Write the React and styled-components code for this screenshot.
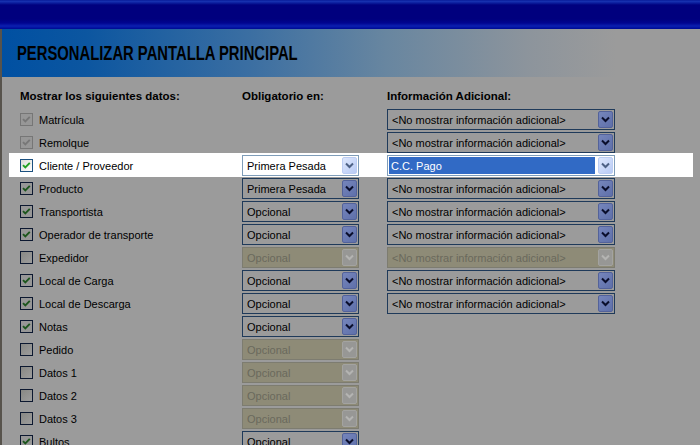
import React from "react";
import styled, { createGlobalStyle, css } from "styled-components";

const Global = createGlobalStyle`
  html, body { margin: 0; padding: 0; }
  body {
    width: 700px; height: 445px; overflow: hidden;
    background: #9b9b9b;
    font-family: "Liberation Sans", Arial, sans-serif;
  }
`;

const Window = styled.div`
  width: 700px; height: 445px; overflow: hidden;
  display: flex; flex-direction: column;
  background: #9b9b9b;
`;

const TitleBar = styled.div`
  height: 29px; flex: none;
  background: linear-gradient(to bottom,
    #00108f 0px, #1a36b4 1px, #0a1c9c 3px, #00007e 5px,
    #00007e 19px, #000490 23px, #0c20b0 26px, #0010a0 28px, #000a90 29px);
`;

const Main = styled.div`
  flex: 1;
  border-left: 2px solid #57534c;
  display: flex; flex-direction: column;
`;

const Header = styled.div`
  height: 48px; flex: none;
  display: flex; align-items: center;
  padding-left: 15px;
  background: linear-gradient(to right, #0050a2 0%, #0c56a0 12%, #3a6ea2 35%, #6886a0 55%, #8c949c 75%, #9b9b9b 88%);
`;

const Title = styled.h1`
  margin: 0;
  font-family: "Liberation Sans", Arial, sans-serif;
  font-weight: bold;
  font-size: 20px;
  color: #000;
  white-space: nowrap;
  transform: scaleX(0.74);
  transform-origin: left center;
`;

const Content = styled.div`
  display: flex; flex-direction: column;
  padding-left: 7px;
`;

const Grid = css`
  display: grid;
  grid-template-columns: 222px 145px 228px;
  align-items: center;
  width: 684px;
  padding-left: 11px;
  box-sizing: border-box;
`;

const HeadRow = styled.div`
  ${Grid};
  height: 31px;
  padding-top: 6px;
  box-sizing: border-box;
`;

const ColHead = styled.div`
  font-weight: bold;
  font-size: 11.5px;
  color: #000;
`;

const Row = styled.div`
  ${Grid};
  height: 23px;
  background: ${(p) => (p.$hl ? "#ffffff" : "transparent")};
  box-shadow: ${(p) => (p.$hl ? "0 -1px 0 #ffffff" : "none")};
`;

const LabelCell = styled.div`
  display: flex; align-items: center; gap: 6px;
  font-size: 11px; color: #000;
`;

const Box = styled.span`
  width: 13px; height: 13px; box-sizing: border-box;
  display: inline-flex; align-items: center; justify-content: center;
  border: 1px solid ${(p) => (p.$hl ? "#1c5180" : p.$state === "disabled" ? "#767676" : "#0c1830")};
  background: ${(p) => (p.$hl ? "linear-gradient(135deg,#dcdcd7,#ffffff)" : p.$state === "off" ? "linear-gradient(135deg,#888884,#9d9d9d)" : "#979797")};
`;

const Combo = styled.div`
  width: ${(p) => p.$w}px; height: 21px; box-sizing: border-box;
  display: flex; align-items: center;
  padding: 1px;
  border: 1px solid ${(p) => (p.$hl ? "#7f9db9" : p.$disabled ? "#7d7c70" : "#1f3a5a")};
  background: ${(p) => (p.$hl ? "#ffffff" : p.$disabled ? "#8e8b77" : "#9b9b9b")};
`;

const ComboText = styled.div`
  flex: 1; height: 100%;
  display: flex; align-items: center;
  padding-left: ${(p) => (p.$sel ? "2px" : "3px")};
  margin-right: ${(p) => (p.$sel ? "3px" : "0")};
  font-size: 11px;
  white-space: nowrap; overflow: hidden;
  color: ${(p) => (p.$sel ? "#ffffff" : p.$disabled ? "#6a695c" : "#000")};
  background: ${(p) => (p.$sel ? "#316ac5" : "transparent")};
`;

const ComboBtn = styled.div`
  width: 15px; height: 100%; flex: none; box-sizing: border-box;
  display: flex; align-items: center; justify-content: center;
  border: 1px solid ${(p) => (p.$hl ? "#bccdf3" : p.$disabled ? "#a3a3a0" : "#53629a")};
  border-radius: 2px;
  background: ${(p) =>
    p.$hl
      ? "linear-gradient(135deg,#dde7fd,#b9cbf5)"
      : p.$disabled
      ? "#979795"
      : "linear-gradient(135deg,#7585bb,#5f70aa)"};
`;

const Check = ({ color }) => (
  <svg width="9" height="9" viewBox="0 0 9 9">
    <path d="M1 4.2 L3.3 6.5 L7.8 1.8" fill="none" stroke={color} strokeWidth="1.9" />
  </svg>
);

const Chevron = ({ color }) => (
  <svg width="9" height="7" viewBox="0 0 9 7">
    <path d="M1 1.5 L4.5 5 L8 1.5" fill="none" stroke={color} strokeWidth="2" />
  </svg>
);

const CheckBox = ({ state, hl }) => (
  <Box $state={state} $hl={hl}>
    {state !== "off" && (
      <Check color={hl ? "#21a121" : state === "disabled" ? "#777777" : "#1d561d"} />
    )}
  </Box>
);

const Select = ({ value, w, disabled, hl, sel }) => (
  <Combo $w={w} $disabled={disabled} $hl={hl}>
    <ComboText $disabled={disabled} $sel={sel}>{value}</ComboText>
    <ComboBtn $disabled={disabled} $hl={hl}>
      <Chevron color={hl ? "#4d6185" : disabled ? "#b4b4b2" : "#0a0e2c"} />
    </ComboBtn>
  </Combo>
);

const NO = "<No mostrar información adicional>";

const rows = [
  { label: "Matrícula", check: "disabled", info: NO },
  { label: "Remolque", check: "disabled", info: NO },
  { label: "Cliente / Proveedor", check: "on", oblig: "Primera Pesada", info: "C.C. Pago", hl: true },
  { label: "Producto", check: "on", oblig: "Primera Pesada", info: NO },
  { label: "Transportista", check: "on", oblig: "Opcional", info: NO },
  { label: "Operador de transporte", check: "on", oblig: "Opcional", info: NO },
  { label: "Expedidor", check: "off", oblig: "Opcional", info: NO, disabled: true },
  { label: "Local de Carga", check: "on", oblig: "Opcional", info: NO },
  { label: "Local de Descarga", check: "on", oblig: "Opcional", info: NO },
  { label: "Notas", check: "on", oblig: "Opcional" },
  { label: "Pedido", check: "off", oblig: "Opcional", disabled: true },
  { label: "Datos 1", check: "off", oblig: "Opcional", disabled: true },
  { label: "Datos 2", check: "off", oblig: "Opcional", disabled: true },
  { label: "Datos 3", check: "off", oblig: "Opcional", disabled: true },
  { label: "Bultos", check: "on", oblig: "Opcional" },
];

export default function App() {
  return (
    <>
      <Global />
      <Window>
        <TitleBar />
        <Main>
          <Header>
            <Title>PERSONALIZAR PANTALLA PRINCIPAL</Title>
          </Header>
          <Content>
            <HeadRow>
              <ColHead>Mostrar los siguientes datos:</ColHead>
              <ColHead>Obligatorio en:</ColHead>
              <ColHead>Información Adicional:</ColHead>
            </HeadRow>
            {rows.map((r) => (
              <Row key={r.label} $hl={r.hl}>
                <LabelCell>
                  <CheckBox state={r.check} hl={r.hl} />
                  {r.label}
                </LabelCell>
                <div>
                  {r.oblig && <Select w={117} value={r.oblig} disabled={r.disabled} hl={r.hl} />}
                </div>
                <div>
                  {r.info && (
                    <Select w={228} value={r.info} disabled={r.disabled} hl={r.hl} sel={r.hl} />
                  )}
                </div>
              </Row>
            ))}
          </Content>
        </Main>
      </Window>
    </>
  );
}
